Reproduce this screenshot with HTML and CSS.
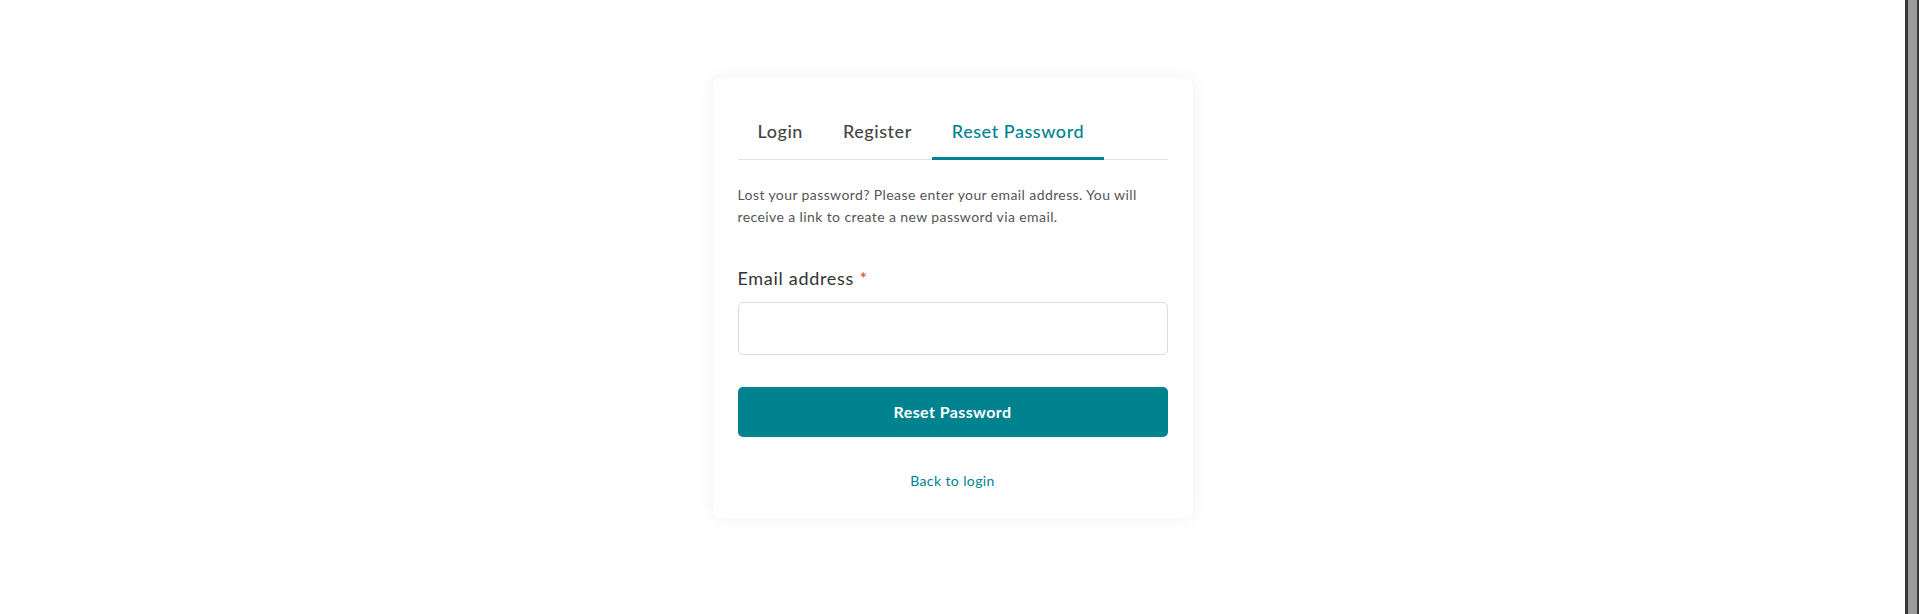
FILE: index.html
```html
<!DOCTYPE html>
<html lang="en">
<head>
<meta charset="utf-8">
<title>Reset Password</title>
<link rel="stylesheet" href="styles.css">
</head>
<body>
<div class="page">
  <main class="main">
    <section class="card">
      <nav class="tabs">
        <a class="tab">Login</a>
        <a class="tab">Register</a>
        <a class="tab active">Reset Password</a>
      </nav>
      <p class="intro">Lost your password? Please enter your email address. You will receive a link to create a new password via email.</p>
      <form class="form">
        <label class="label" for="email">Email address <span class="req">*</span></label>
        <input class="input" id="email" type="email">
        <button class="btn" type="button">Reset Password</button>
      </form>
      <div class="back"><a class="link">Back to login</a></div>
    </section>
  </main>
  <div class="rail"></div>
</div>
</body>
</html>
```
FILE: styles.css
```css
* { box-sizing: border-box; }
html, body { margin: 0; padding: 0; background: #fff; }
body { font-family: "Lato", "Noto Sans", sans-serif; color: #333; }
.page { display: flex; height: 614px; }
.main { flex: 1; display: flex; justify-content: center; align-items: flex-start; padding-top: 78px; }
.rail { width: 14px; background: #9b9b9b; border-left: 3px solid #363636; border-right: 2px solid #363636; }
.card {
  width: 480px; background: #fff; border-radius: 8px;
  padding: 25px 25px 26px;
  box-shadow: 0 0 18px rgba(0,0,0,0.06);
}
.tabs { display: flex; border-bottom: 1px solid #e2e2e2; }
.tab {
  padding: 16px 20px 14px; font-size: 18px; line-height: 24px; font-weight: 500;
  letter-spacing: 0.55px;
  color: #454545; border-bottom: 3px solid transparent; margin-bottom: -1px; cursor: pointer;
}
.tab.active { color: #00828f; border-bottom-color: #00828f; }
.intro { margin: 24px 0 0; font-size: 14px; line-height: 22.4px; color: #555; letter-spacing: 0.4px; }
.form { display: flex; flex-direction: column; margin-top: 36px; }
.label { font-size: 18px; line-height: 26px; color: #333; margin-bottom: 11px; letter-spacing: 0.7px; }
.req { color: #e2401c; }
.input {
  height: 53px; border: 1px solid #dcdcdc; border-radius: 5px; background: #fff;
  font: inherit; padding: 0 14px; outline: none;
}
.btn {
  margin-top: 32px; height: 50px; border: 0; border-radius: 5px; background: #00828f;
  color: #fff; font-family: inherit; font-size: 16px; font-weight: 700; letter-spacing: 0.4px; cursor: pointer;
}
.back { margin-top: 33px; text-align: center; font-size: 14px; line-height: 22.4px; letter-spacing: 0.4px; }
.link { color: #00828f; cursor: pointer; }
```
